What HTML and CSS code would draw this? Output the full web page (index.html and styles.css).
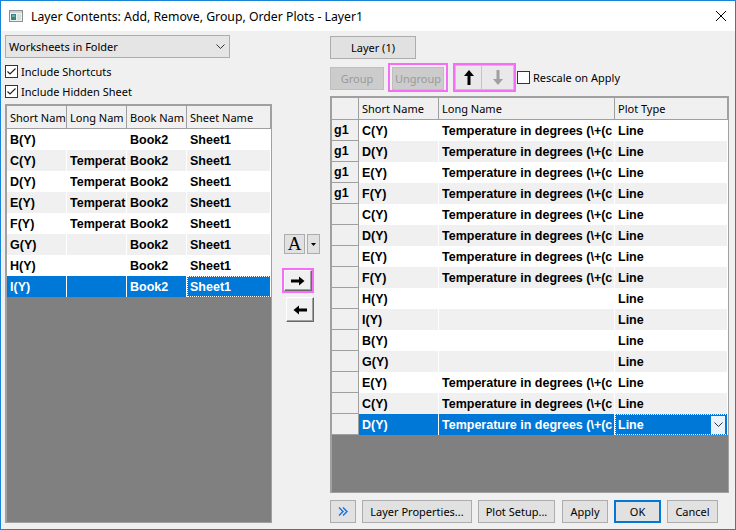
FILE: index.html
```html
<!DOCTYPE html>
<html>
<head>
    <link rel="stylesheet" href="styles.css">
</head>
<body>
    <div class="window">
        <div class="titlebar">
            <svg class="app-icon" viewBox="0 0 14 12">
                <rect x="0.5" y="0.5" width="13" height="11" fill="#eef2f2" stroke="#8a8f93"/>
                <rect x="1" y="1" width="12" height="2" fill="#c9d3d8"/>
                <rect x="2" y="4" width="5" height="6" fill="#3b7f8f"/>
                <rect x="3" y="5" width="3" height="2" fill="#6fb28a"/>
                <rect x="8" y="4" width="4" height="6" fill="#cfe6d2"/>
            </svg>
            <span class="title">Layer Contents: Add, Remove, Group, Order Plots - Layer1</span>
            <svg class="close" viewBox="0 0 10 10">
                <path d="M0 0L10 10M10 0L0 10" stroke="#000" stroke-width="1"/>
            </svg>
        </div>

        <div class="content">
            <div class="left">
                <div class="select">
                    <span>Worksheets in Folder</span>
                    <svg class="chevron" viewBox="0 0 9 5"><path d="M0.5 0.5L4.5 4.5L8.5 0.5" fill="none" stroke="#333"/></svg>
                </div>
                <div class="check first">
                    <span class="box"><svg viewBox="0 0 11 11"><path d="M1.5 5.5L4 8L9.5 2.5" fill="none" stroke="#222" stroke-width="1.2"/></svg></span>
                    Include Shortcuts
                </div>
                <div class="check">
                    <span class="box"><svg viewBox="0 0 11 11"><path d="M1.5 5.5L4 8L9.5 2.5" fill="none" stroke="#222" stroke-width="1.2"/></svg></span>
                    Include Hidden Sheet
                </div>

                <div class="grid left-grid">
                    <table>
                        <colgroup>
                            <col style="width:60px"><col style="width:60px"><col style="width:60px"><col style="width:84px">
                        </colgroup>
                        <thead>
                            <tr><th><div class="clip">Short Nam</div></th><th><div class="clip">Long Nam</div></th><th><div class="clip">Book Nam</div></th><th><div class="clip">Sheet Name</div></th></tr>
                        </thead>
                        <tbody id="leftBody"></tbody>
                    </table>
                </div>
            </div>

            <div class="middle">
                <div class="font-row">
                    <button class="btn-a">A</button>
                    <button class="btn-dd"><svg viewBox="0 0 5 3"><path d="M0 0H5L2.5 3Z" fill="#000"/></svg></button>
                </div>
                <div class="hl arrow-hl">
                    <button class="btn3d arrow-btn">
                        <svg viewBox="0 0 14 10"><path d="M0 3.5H8V0.5L13.5 5L8 9.5V6.5H0Z" fill="#000"/></svg>
                    </button>
                </div>
                <button class="btn3d arrow-btn back">
                    <svg viewBox="0 0 14 10"><path d="M14 3.5H6V0.5L0.5 5L6 9.5V6.5H14Z" fill="#000"/></svg>
                </button>
            </div>

            <div class="right">
                <button class="btn layer-btn">Layer (1)</button>
                <div class="toolbar">
                    <button class="btn disabled group-btn">Group</button>
                    <div class="hl ungroup-hl">
                        <button class="btn disabled ungroup-btn">Ungroup</button>
                    </div>
                    <div class="hl updown-hl">
                        <button class="move-btn up">
                            <svg viewBox="0 0 10 15"><path d="M5 0L10 6H6.5V15H3.5V6H0Z" fill="#000"/></svg>
                        </button>
                        <button class="move-btn down">
                            <svg viewBox="0 0 10 15"><path d="M5 15L10 9H6.5V0H3.5V9H0Z" fill="#a0a0a0"/></svg>
                        </button>
                    </div>
                    <div class="check rescale">
                        <span class="box"></span>
                        Rescale on Apply
                    </div>
                </div>

                <div class="grid right-grid">
                    <table>
                        <colgroup>
                            <col style="width:27px"><col style="width:80px"><col style="width:176px"><col style="width:113px">
                        </colgroup>
                        <thead>
                            <tr><th class="corner"></th><th><div class="clip">Short Name</div></th><th><div class="clip">Long Name</div></th><th><div class="clip">Plot Type</div></th></tr>
                        </thead>
                        <tbody id="rightBody"></tbody>
                    </table>
                </div>

                <div class="footer">
                    <button class="btn more">
                        <svg viewBox="0 0 10 9"><path d="M1 0.5L5 4.5L1 8.5M5 0.5L9 4.5L5 8.5" fill="none" stroke="#1c6fd6" stroke-width="1.4"/></svg>
                    </button>
                    <button class="btn props">Layer Properties...</button>
                    <button class="btn setup">Plot Setup...</button>
                    <button class="btn apply">Apply</button>
                    <button class="btn ok">OK</button>
                    <button class="btn cancel">Cancel</button>
                </div>
            </div>
        </div>
    </div>

    <script>
        // only the part of the long name that the narrow columns show
        var shortLong = "Temperat";
        var longName = "Temperature in degrees (\\+(c";

        var sheets = [
            ["B(Y)", ""], ["C(Y)", shortLong], ["D(Y)", shortLong], ["E(Y)", shortLong],
            ["F(Y)", shortLong], ["G(Y)", ""], ["H(Y)", ""], ["I(Y)", ""]
        ];

        var plots = [
            ["g1", "C(Y)", longName], ["g1", "D(Y)", longName], ["g1", "E(Y)", longName], ["g1", "F(Y)", longName],
            ["", "C(Y)", longName], ["", "D(Y)", longName], ["", "E(Y)", longName], ["", "F(Y)", longName],
            ["", "H(Y)", ""], ["", "I(Y)", ""], ["", "B(Y)", ""], ["", "G(Y)", ""],
            ["", "E(Y)", longName], ["", "C(Y)", longName], ["", "D(Y)", longName]
        ];

        function addCell(row, index, text) {
            var cell = row.insertCell(index);
            var inner = document.createElement("div");
            inner.className = "clip";
            inner.textContent = text;
            cell.appendChild(inner);
            return cell;
        }

        function fillLeft() {
            var body = document.getElementById("leftBody");
            sheets.forEach(function(item, i) {
                var row = body.insertRow();
                var last = i === sheets.length - 1;
                if (last) row.className = "selected";
                [item[0], item[1], "Book2", "Sheet1"].forEach(function(text, c) {
                    var cell = addCell(row, c, text);
                    if (c === 3 && last) cell.className = "focus";
                });
            });
        }

        function fillRight() {
            var body = document.getElementById("rightBody");
            plots.forEach(function(item, i) {
                var row = body.insertRow();
                var last = i === plots.length - 1;
                if (last) row.className = "selected";
                addCell(row, 0, item[0]).className = "rowhead";
                addCell(row, 1, item[1]);
                addCell(row, 2, item[2]);
                if (last) {
                    var type = row.insertCell(3);
                    type.className = "focus";
                    type.innerHTML = '<div class="combo"><span>Line</span><span class="combo-btn"><svg viewBox="0 0 9 5"><path d="M0.5 0.5L4.5 4.5L8.5 0.5" fill="none" stroke="#333"/></svg></span></div>';
                } else {
                    addCell(row, 3, "Line");
                }
            });
        }

        fillLeft();
        fillRight();
    </script>
</body>
</html>
```

FILE: styles.css
```css
* {
    box-sizing: border-box;
}

body {
    margin: 0;
    font-family: "Noto Sans", sans-serif;
    font-size: 11px;
    color: #000;
}

button {
    font-family: "Noto Sans", sans-serif;
    font-size: 11px;
    color: #000;
    margin: 0;
    padding: 0;
}

.window {
    width: 736px;
    height: 530px;
    border: 1px solid #1883d7;
    background-color: #f0f0f0;
    display: flex;
    flex-direction: column;
}

.titlebar {
    height: 30px;
    flex: none;
    background-color: #fff;
    display: flex;
    align-items: center;
    padding-left: 8px;
}

.app-icon {
    width: 14px;
    height: 12px;
    margin-right: 8px;
}

.title {
    flex: 1;
    font-size: 12.25px;
}

.close {
    width: 10px;
    height: 10px;
    margin-right: 9px;
}

.content {
    flex: 1;
    display: flex;
    padding: 4px 6px 6px 4px;
}

/* left side */

.left {
    width: 267px;
    display: flex;
    flex-direction: column;
}

.select {
    width: 225px;
    height: 23px;
    border: 1px solid #adadad;
    background-color: #e5e5e5;
    display: flex;
    align-items: center;
    justify-content: space-between;
    padding: 0 4px 0 3px;
}

.chevron {
    width: 9px;
    height: 5px;
}

.check {
    height: 20px;
    display: flex;
    align-items: center;
}

.check.first {
    margin-top: 3px;
}

.box {
    width: 13px;
    height: 13px;
    border: 1px solid #333;
    background-color: #fff;
    margin-right: 3px;
    display: flex;
}

.box svg {
    width: 11px;
    height: 11px;
}

.grid {
    border: 1px solid #a0a0a0;
    border-top-width: 2px;
    border-left-width: 2px;
    background-color: #808080;
    overflow: hidden;
}

.left-grid {
    flex: 1;
    margin-top: 3px;
}

table {
    border-collapse: separate;
    border-spacing: 0;
    table-layout: fixed;
}

.clip {
    overflow: hidden;
    white-space: nowrap;
}

th {
    height: 23px;
    background-color: #f0f0f0;
    font-weight: normal;
    text-align: left;
    padding: 0 0 0 3px;
    border-right: 1px solid #a0a0a0;
    border-bottom: 1px solid #a0a0a0;
    overflow: hidden;
}

td {
    height: 21px;
    padding: 0 0 0 3px;
    font-family: "Liberation Sans", Arial, sans-serif;
    font-size: 12.5px;
    font-weight: bold;
    border-right: 1px solid #fff;
    overflow: hidden;
    background-color: #fff;
}

tbody tr:nth-child(even) td {
    background-color: #f0f0f0;
}

tbody tr.selected td {
    background-color: #0078d7;
    color: #fff;
}

td.focus {
    outline: 1px dotted #fff;
    outline-offset: -1px;
}

.left-grid table {
    width: 264px;
}

/* middle buttons */

.middle {
    width: 58px;
    display: flex;
    flex-direction: column;
    align-items: center;
    padding-top: 199px;
}

.font-row {
    display: flex;
    gap: 2px;
    margin-left: 2px;
}

.btn-a {
    width: 21px;
    height: 20px;
    border: 1px solid #adadad;
    background-color: #e1e1e1;
    font-family: "Liberation Serif", serif;
    font-size: 19px;
    line-height: 18px;
}

.btn-dd {
    width: 13px;
    height: 20px;
    border: 1px solid #adadad;
    background-color: #e1e1e1;
    display: flex;
    align-items: center;
    justify-content: center;
}

.btn-dd svg {
    width: 5px;
    height: 3px;
}

.hl {
    border: 2px solid #f56ef5;
    display: flex;
    align-items: center;
}

.arrow-hl {
    margin-top: 14px;
    margin-right: 6px;
}

.btn3d {
    background-color: #f0f0f0;
    border: 1px solid;
    border-color: #fff #696969 #696969 #fff;
    box-shadow: inset -1px -1px 0 #a0a0a0;
    display: flex;
    align-items: center;
    justify-content: center;
}

.arrow-btn {
    width: 28px;
    height: 21px;
}

.arrow-btn svg {
    width: 14px;
    height: 10px;
}

.arrow-btn.back {
    height: 25px;
    margin-top: 4px;
    margin-right: 3px;
}

/* right side */

.right {
    width: 399px;
    display: flex;
    flex-direction: column;
}

.btn {
    height: 23px;
    border: 1px solid #adadad;
    background-color: #e1e1e1;
}

.btn.disabled {
    background-color: #cccccc;
    border-color: #bfbfbf;
    color: #9a9a9a;
}

.layer-btn {
    width: 86px;
    margin-top: 1px;
}

.toolbar {
    height: 29px;
    margin-top: 4px;
    display: flex;
    align-items: center;
}

.group-btn {
    width: 54px;
    margin-top: 2px;
}

.ungroup-hl {
    height: 29px;
    margin-left: 4px;
    padding: 0 2px;
}

.ungroup-btn {
    width: 52px;
    margin-top: 1px;
}

.updown-hl {
    height: 29px;
    margin-left: 5px;
}

.move-btn {
    height: 25px;
    background-color: #e9e9e9;
    border: 1px solid #c4c4c4;
    display: flex;
    align-items: center;
    justify-content: center;
}

.move-btn.up {
    width: 27px;
}

.move-btn.down {
    width: 32px;
    border-left: none;
}

.move-btn svg {
    width: 10px;
    height: 15px;
}

.check.rescale {
    margin-left: 1px;
}

.right-grid {
    flex: 1;
    margin-top: 4px;
}

.right-grid table {
    width: 396px;
}

.right-grid th {
    height: 22px;
}

.right-grid th.corner {
    padding: 0;
}

td.rowhead {
    background-color: #f0f0f0;
    border-right: 1px solid #a0a0a0;
    border-bottom: 1px solid #a0a0a0;
    padding: 0 0 0 2px;
}

tbody tr:nth-child(even) td.rowhead,
tbody tr.selected td.rowhead {
    background-color: #f0f0f0;
    color: #000;
}

.combo {
    display: flex;
    align-items: center;
    justify-content: space-between;
    padding-right: 2px;
}

.combo-btn {
    width: 14px;
    height: 18px;
    background-color: #eaf2fb;
    display: flex;
    align-items: center;
    justify-content: center;
}

.combo-btn svg {
    width: 9px;
    height: 5px;
}

.footer {
    height: 23px;
    margin-top: 7px;
    display: flex;
    gap: 6px;
}

.more {
    width: 26px;
    display: flex;
    align-items: center;
    justify-content: center;
}

.more svg {
    width: 10px;
    height: 9px;
}

.props {
    width: 110px;
}

.setup {
    width: 77px;
}

.apply {
    width: 46px;
    margin-left: 1px;
}

.ok {
    width: 47px;
    border: 2px solid #0078d7;
}

.cancel {
    width: 51px;
}
```
